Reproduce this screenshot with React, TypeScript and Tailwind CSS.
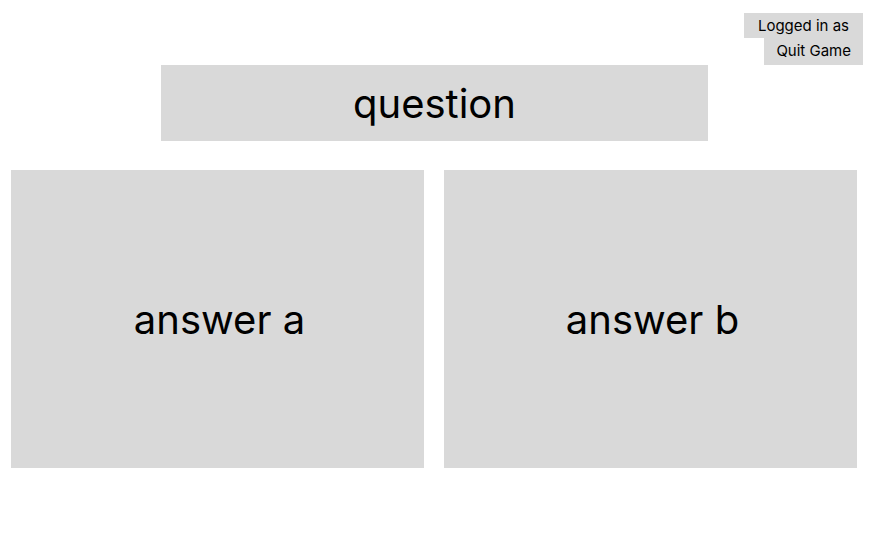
function AnswerButton({ label }: { label: string }) {
  return (
    <button
      type="button"
      className="flex h-[298px] flex-1 items-center justify-center bg-[#d9d9d9] pt-0.5 pl-1 text-[40px] leading-[48px]"
    >
      {label}
    </button>
  );
}

export default function App() {
  return (
    <div className="min-h-screen bg-white pt-[13px] font-['Inter',sans-serif] text-black">
      <header className="flex flex-col items-end pr-[7px] text-[15px] leading-[18px]">
        <p className="h-[25px] bg-[#d9d9d9] pt-1 pr-[14px] pl-[14px]">Logged in as</p>
        <button type="button" className="flex h-[27px] bg-[#d9d9d9] px-3 pt-1">
          Quit Game
        </button>
      </header>
      <main>
        <div className="pr-[162px] pl-[161px]">
          <h1 className="flex h-[76px] items-center justify-center bg-[#d9d9d9] pt-0.5 text-[40px] leading-[48px]">
            question
          </h1>
        </div>
        <div className="mt-[29px] flex gap-5 pr-[13px] pl-[11px]">
          <AnswerButton label="answer a" />
          <AnswerButton label="answer b" />
        </div>
      </main>
    </div>
  );
}
